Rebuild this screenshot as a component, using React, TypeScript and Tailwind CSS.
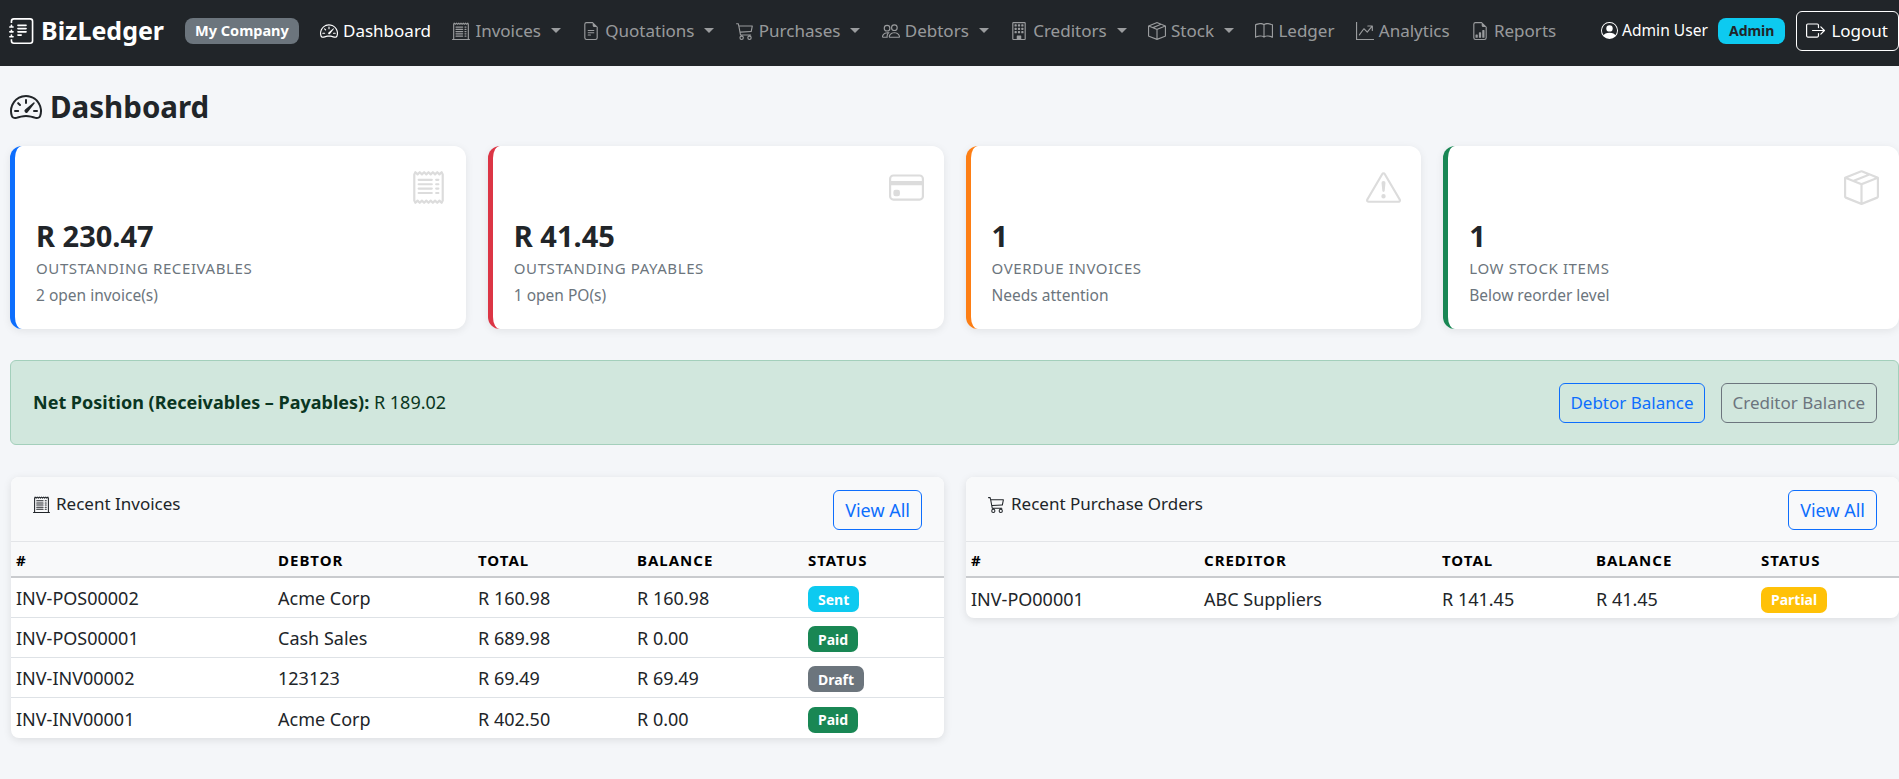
import React from "react";
import {
  BsJournalText, BsSpeedometer2, BsReceiptCutoff, BsFileEarmarkText, BsCart3, BsPeople, BsBuilding, BsBoxSeam, BsBook,
  BsGraphUpArrow, BsFileEarmarkBarGraph, BsPersonCircle, BsBoxArrowRight, BsReceipt, BsCreditCard, BsExclamationTriangle,
} from "react-icons/bs";

function NavItem({ icon, label, caret, active }: { icon: React.ReactNode; label: string; caret?: boolean; active?: boolean }) {
  return (
    <a className={"flex items-center h-[40px] px-[10.7px] text-[17px] " + (active ? "text-white" : "text-[#ffffff8c]")}>
      <span className="mr-[5px] text-[18px] flex items-center">{icon}</span>
      <span>{label}</span>
      {caret && <span className="ml-[10px] w-0 h-0 border-t-[5px] border-x-[5px] border-x-transparent border-t-current" />}
    </a>
  );
}

function Stat({ border, icon, value, label, sub }: { border: string; icon: React.ReactNode; value: string; label: string; sub: string }) {
  return (
    <div className={"relative bg-white rounded-[12px] h-[183px] border-l-[5px] pl-[21px] pt-[73px] shadow-[0_2px_8px_rgba(0,0,0,0.08)] " + border}>
      <div className="absolute right-[20px] top-[24px] text-[35px] text-[#dcdcdc]">{icon}</div>
      <div className="text-[29px] font-bold leading-[34px] text-[#212529]">{value}</div>
      <div className="text-[15px] tracking-[0.6px] leading-[21px] uppercase text-[#6c757d] mt-[5px]">{label}</div>
      <div className="text-[15.5px] leading-[21px] text-[#6c757d] mt-[6px]">{sub}</div>
    </div>
  );
}

function Badge({ text, cls }: { text: string; cls: string }) {
  return <span className={"inline-flex items-center h-[26px] rounded-[7px] px-[10px] text-[14px] font-bold " + cls}>{text}</span>;
}

type Row = [string, string, string, string, React.ReactNode];

function TableCard({ icon, title, second, cols, rows }: { icon: React.ReactNode; title: string; second: string; cols: string; rows: Row[] }) {
  return (
    <div className="bg-white rounded-[8px] shadow-[0_2px_8px_rgba(0,0,0,0.1)] overflow-hidden">
      <div className="h-[65px] bg-[#f8f9fa] border-b border-[#e3e5e8] flex justify-between pl-[22px] pr-[22px] pt-[13px]">
        <div className="flex items-center h-[28px] text-[17px] text-[#212529]">
          <span className="mr-[6px] text-[17px] flex items-center">{icon}</span>
          {title}
        </div>
        <a className="h-[40px] px-[11px] flex items-center border border-[#0d6efd] rounded-[6px] text-[#0d6efd] text-[18px]">View All</a>
      </div>
      <div className={"grid h-[36px] items-center bg-[#f8f9fa] border-b-2 border-[#c9cbce] text-[15px] tracking-[1px] font-bold text-black uppercase pl-[5px] pt-[2px] " + cols}>
        <div>#</div>
        <div>{second}</div>
        <div>Total</div>
        <div>Balance</div>
        <div>Status</div>
      </div>
      {rows.map((r, i) => (
        <div key={i} className={"grid h-[40px] items-center text-[18px] text-[#212529] pl-[5px] pt-[2px] " + cols + (i < rows.length - 1 ? " border-b border-[#dee2e6]" : "")}>
          <div>{r[0]}</div>
          <div>{r[1]}</div>
          <div>{r[2]}</div>
          <div>{r[3]}</div>
          <div>{r[4]}</div>
        </div>
      ))}
    </div>
  );
}

const sent = <Badge text="Sent" cls="bg-[#0dcaf0] text-white" />;
const paid = <Badge text="Paid" cls="bg-[#198754] text-white" />;
const draft = <Badge text="Draft" cls="bg-[#6c757d] text-white" />;
const partial = <Badge text="Partial" cls="bg-[#ffc107] text-white" />;

export default function App() {
  return (
    <div className="min-h-[779px] bg-[#f4f6f9] font-['Noto_Sans','Open_Sans',sans-serif] overflow-hidden">
      <nav className="h-[66px] bg-[#212529] flex items-center pl-[9px] pb-[5px]">
        <div className="flex items-center text-white text-[25px] font-bold mr-[21px]">
          <BsJournalText className="text-[26px] mr-[6px]" />
          BizLedger
        </div>
        <span className="bg-[#6c757d] text-white text-[14.5px] font-bold rounded-[8px] h-[26px] px-[10px] flex items-center mr-[10.5px]">My Company</span>
        <NavItem active icon={<BsSpeedometer2 />} label="Dashboard" />
        <NavItem caret icon={<BsReceiptCutoff />} label="Invoices" />
        <NavItem caret icon={<BsFileEarmarkText />} label="Quotations" />
        <NavItem caret icon={<BsCart3 />} label="Purchases" />
        <NavItem caret icon={<BsPeople />} label="Debtors" />
        <NavItem caret icon={<BsBuilding />} label="Creditors" />
        <NavItem caret icon={<BsBoxSeam />} label="Stock" />
        <NavItem icon={<BsBook />} label="Ledger" />
        <NavItem icon={<BsGraphUpArrow />} label="Analytics" />
        <NavItem icon={<BsFileEarmarkBarGraph />} label="Reports" />
        <div className="ml-auto flex items-center">
          <span className="flex items-center text-white text-[15.6px] mr-[10px]"><BsPersonCircle className="mr-[4px] text-[17px]" />Admin User</span>
          <span className="bg-[#0dcaf0] text-[#212529] text-[14px] font-bold rounded-[8px] h-[26px] px-[11px] flex items-center mr-[11px]">Admin</span>
          <a className="h-[40px] pl-[9px] pr-[10px] flex items-center border border-white rounded-[6px] text-white text-[17px]"><BsBoxArrowRight className="mr-[6px] text-[19px]" />Logout</a>
        </div>
      </nav>

      <div className="pl-[10px]">
        <h1 className="flex items-center h-[42px] mt-[20px] text-[29.5px] font-bold text-[#212529]">
          <BsSpeedometer2 className="mr-[8px] text-[32px]" />
          Dashboard
        </h1>
        <div className="grid grid-cols-4 gap-[22px] mt-[18px]">
          <Stat border="border-[#0d6efd]" icon={<BsReceipt />} value="R 230.47" label="Outstanding Receivables" sub="2 open invoice(s)" />
          <Stat border="border-[#dc3545]" icon={<BsCreditCard />} value="R 41.45" label="Outstanding Payables" sub="1 open PO(s)" />
          <Stat border="border-[#fd7e14]" icon={<BsExclamationTriangle />} value="1" label="Overdue Invoices" sub="Needs attention" />
          <Stat border="border-[#198754]" icon={<BsBoxSeam />} value="1" label="Low Stock Items" sub="Below reorder level" />
        </div>
        <div className="mt-[31px] h-[85px] bg-[#d1e7dd] border border-[#a3cfbb] rounded-[6px] flex items-center justify-between pl-[22px] pr-[21px] text-[#0a3622] text-[18px]">
          <div className="-mt-[1px]"><span className="font-bold">Net Position (Receivables – Payables):</span> R 189.02</div>
          <div className="flex gap-[16px] text-[17px]">
            <a className="h-[40px] px-[10px] flex items-center border border-[#0d6efd] rounded-[6px] text-[#0d6efd]">Debtor Balance</a>
            <a className="h-[40px] px-[11px] flex items-center border border-[#6c757d] rounded-[6px] text-[#6c757d]">Creditor Balance</a>
          </div>
        </div>
        <div className="grid grid-cols-2 gap-[22px] mt-[32px] ml-[1px] items-start">
          <TableCard
            icon={<BsReceiptCutoff />}
            title="Recent Invoices"
            second="Debtor"
            cols="grid-cols-[262px_200px_159px_171px_1fr]"
            rows={[
              ["INV-POS00002", "Acme Corp", "R 160.98", "R 160.98", sent],
              ["INV-POS00001", "Cash Sales", "R 689.98", "R 0.00", paid],
              ["INV-INV00002", "123123", "R 69.49", "R 69.49", draft],
              ["INV-INV00001", "Acme Corp", "R 402.50", "R 0.00", paid],
            ]}
          />
          <TableCard
            icon={<BsCart3 />}
            title="Recent Purchase Orders"
            second="Creditor"
            cols="grid-cols-[233px_238px_154px_165px_1fr]"
            rows={[["INV-PO00001", "ABC Suppliers", "R 141.45", "R 41.45", partial]]}
          />
        </div>
      </div>
    </div>
  );
}
